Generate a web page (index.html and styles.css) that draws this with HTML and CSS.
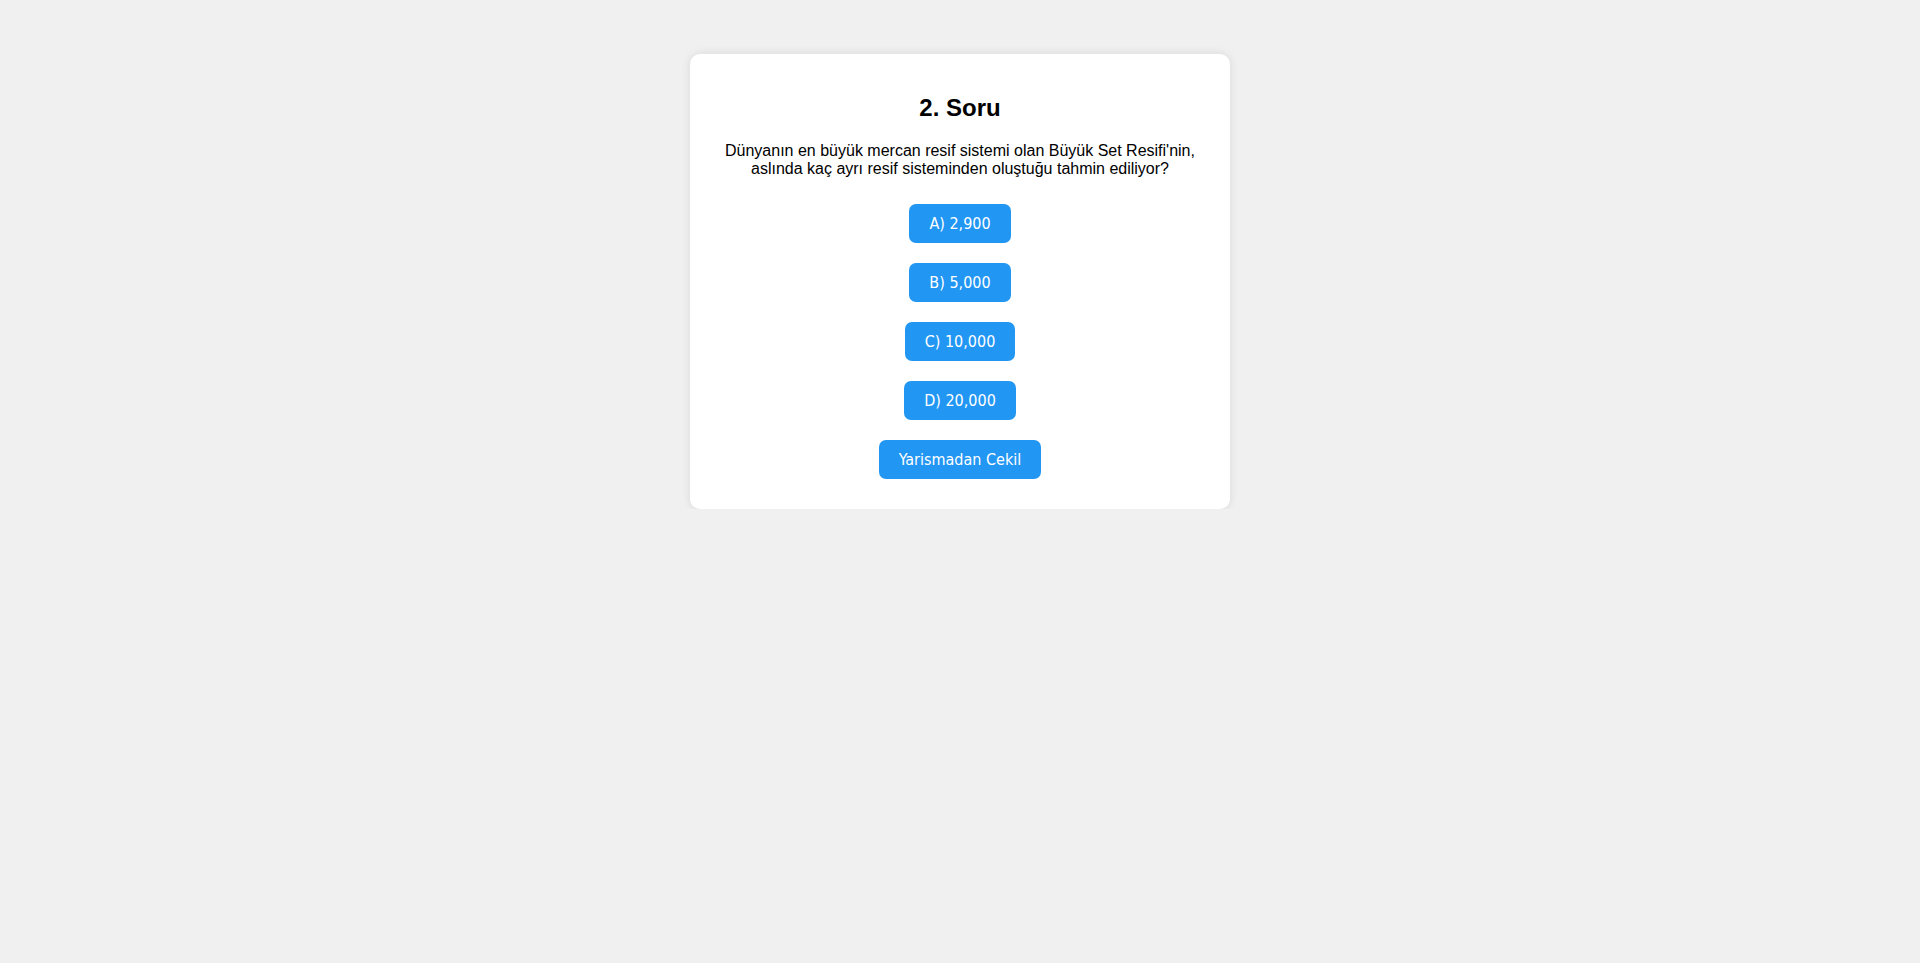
FILE: index.html
```html
<!DOCTYPE html>
<html lang="tr">
<head>
<meta charset="utf-8">
<title>Soru</title>
<link rel="stylesheet" href="styles.css">
</head>
<body>
<div class="card">
  <h2 class="title">2. Soru</h2>
  <p class="question">Dünyanın en büyük mercan resif sistemi olan Büyük Set Resifi'nin, aslında kaç ayrı resif sisteminden oluştuğu tahmin ediliyor?</p>
  <div class="options">
    <button class="btn">A) 2,900</button>
    <button class="btn">B) 5,000</button>
    <button class="btn">C) 10,000</button>
    <button class="btn">D) 20,000</button>
    <button class="btn">Yarismadan Cekil</button>
  </div>
</div>
</body>
</html>
```

FILE: styles.css
```css
html, body {
  margin: 0;
  padding: 0;
}
body {
  background: #f0f0f0;
  font-family: "Liberation Sans", Arial, sans-serif;
  padding-top: 54px;
}
.card {
  width: 500px;
  margin: 0 auto;
  padding: 20px;
  background: #ffffff;
  border-radius: 10px;
  box-shadow: 0 0 10px rgba(0, 0, 0, 0.1);
  text-align: center;
}
.title {
  font-size: 24px;
  font-weight: bold;
  margin: 19.5px 0 20px;
  color: #000;
}
.question {
  font-size: 16px;
  margin: 0 0 16px;
  color: #000;
}
.options {
  display: flex;
  flex-direction: column;
  align-items: center;
  gap: 20px;
  padding: 10px 0;
}
.btn {
  font-family: "DejaVu Sans", Verdana, sans-serif;
  font-stretch: condensed;
  font-size: 16px;
  line-height: 19px;
  padding: 10px 20px;
  border: none;
  border-radius: 7px;
  background: #2196f3;
  color: #ffffff;
  cursor: pointer;
}
```
